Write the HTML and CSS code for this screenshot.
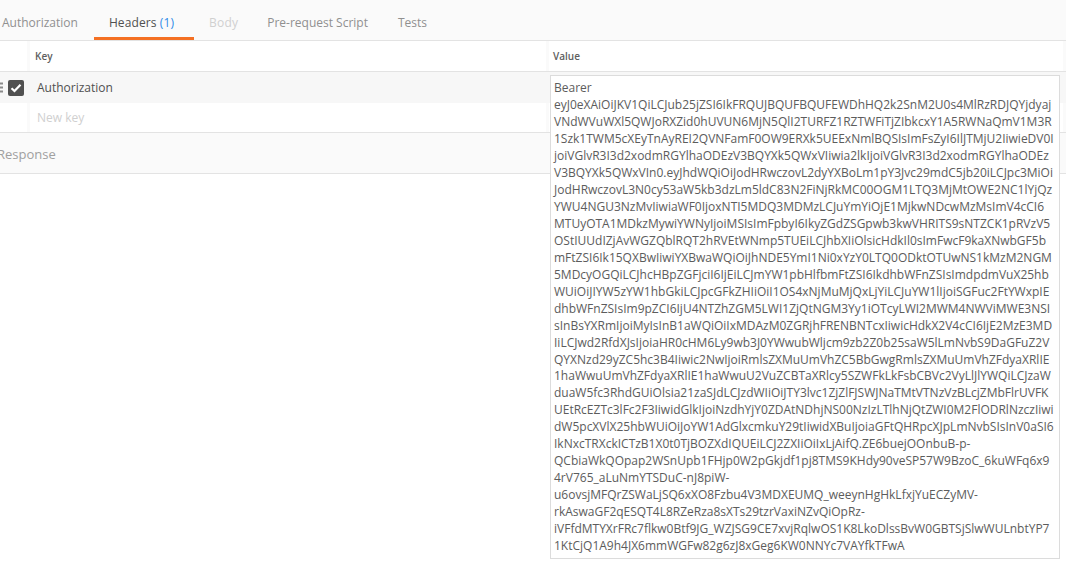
FILE: index.html
```html
<!DOCTYPE html>
<html lang="en">
<head>
<meta charset="utf-8">
<title>Headers</title>
<link rel="stylesheet" href="styles.css">
</head>
<body>
<nav class="tabs">
  <span class="tab">Authorization</span>
  <span class="tab tab-active">Headers <span class="count">(1)</span></span>
  <span class="tab tab-disabled">Body</span>
  <span class="tab tab-script">Pre-request Script</span>
  <span class="tab tab-tests">Tests</span>
</nav>
<div class="row row-head">
  <div class="gutter"></div>
  <div class="cell key"><b>Key</b></div>
  <div class="cell val"><b>Value</b></div>
</div>
<div class="row row-item">
  <div class="gutter">
    <svg class="drag" width="5" height="12" viewBox="0 0 5 12"><path d="M0 1.5h3M0 5.5h3M0 9.5h3" stroke="#8a8a8a" stroke-width="2" fill="none"/></svg>
    <span class="check"><svg width="12" height="10" viewBox="0 0 12 10"><path d="M1.5 5.2 4.5 8 10.5 1.8" stroke="#fff" stroke-width="2.2" fill="none"/></svg></span>
  </div>
  <div class="cell key">Authorization</div>
  <div class="cell val"></div>
</div>
<div class="row row-new">
  <div class="gutter"></div>
  <div class="cell key placeholder">New key</div>
  <div class="cell val"></div>
</div>
<div class="response">Response</div>
<div class="value-box">Bearer
eyJ0eXAiOiJKV1QiLCJub25jZSI6IkFRQUJBQUFBQUFEWDhHQ2k2SnM2U0s4MlRzRDJQYjdyaj
VNdWVuWXl5QWJoRXZid0hUVUN6MjN5QlI2TURFZ1RZTWFiTjZIbkcxY1A5RWNaQmV1M3R
1Szk1TWM5cXEyTnAyREI2QVNFamF0OW9ERXk5UEExNmlBQSIsImFsZyI6IlJTMjU2IiwieDV0I
joiVGlvR3I3d2xodmRGYlhaODEzV3BQYXk5QWxVIiwia2lkIjoiVGlvR3I3d2xodmRGYlhaODEz
V3BQYXk5QWxVIn0.eyJhdWQiOiJodHRwczovL2dyYXBoLm1pY3Jvc29mdC5jb20iLCJpc3MiOi
JodHRwczovL3N0cy53aW5kb3dzLm5ldC83N2FiNjRkMC00OGM1LTQ3MjMtOWE2NC1lYjQz
YWU4NGU3NzMvIiwiaWF0IjoxNTI5MDQ3MDMzLCJuYmYiOjE1MjkwNDcwMzMsImV4cCI6
MTUyOTA1MDkzMywiYWNyIjoiMSIsImFpbyI6IkyZGdZSGpwb3kwVHRITS9sNTZCK1pRVzV5
OStIUUdIZjAvWGZQblRQT2hRVEtWNmp5TUEiLCJhbXIiOlsicHdkIl0sImFwcF9kaXNwbGF5b
mFtZSI6Ik15QXBwIiwiYXBwaWQiOiJhNDE5YmI1Ni0xYzY0LTQ0ODktOTUwNS1kMzM2NGM
5MDcyOGQiLCJhcHBpZGFjciI6IjEiLCJmYW1pbHlfbmFtZSI6IkdhbWFnZSIsImdpdmVuX25hb
WUiOiJIYW5zYW1hbGkiLCJpcGFkZHIiOiI1OS4xNjMuMjQxLjYiLCJuYW1lIjoiSGFuc2FtYWxpIE
dhbWFnZSIsIm9pZCI6IjU4NTZhZGM5LWI1ZjQtNGM3Yy1iOTcyLWI2MWM4NWViMWE3NSI
sInBsYXRmIjoiMyIsInB1aWQiOiIxMDAzM0ZGRjhFRENBNTcxIiwicHdkX2V4cCI6IjE2MzE3MD
IiLCJwd2RfdXJsIjoiaHR0cHM6Ly9wb3J0YWwubWljcm9zb2Z0b25saW5lLmNvbS9DaGFuZ2V
QYXNzd29yZC5hc3B4Iiwic2NwIjoiRmlsZXMuUmVhZC5BbGwgRmlsZXMuUmVhZFdyaXRlIE
1haWwuUmVhZFdyaXRlIE1haWwuU2VuZCBTaXRlcy5SZWFkLkFsbCBVc2VyLlJlYWQiLCJzaW
duaW5fc3RhdGUiOlsia21zaSJdLCJzdWIiOiJTY3lvc1ZjZlFJSWJNaTMtVTNzVzBLcjZMbFlrUVFK
UEtRcEZTc3lFc2F3IiwidGlkIjoiNzdhYjY0ZDAtNDhjNS00NzIzLTlhNjQtZWI0M2FlODRlNzczIiwi
dW5pcXVlX25hbWUiOiJoYW1AdGlxcmkuY29tIiwidXBuIjoiaGFtQHRpcXJpLmNvbSIsInV0aSI6
IkNxcTRXckICTzB1X0t0TjBOZXdIQUEiLCJ2ZXIiOiIxLjAifQ.ZE6buejOOnbuB-p-
QCbiaWkQOpap2WSnUpb1FHjp0W2pGkjdf1pj8TMS9KHdy90veSP57W9BzoC_6kuWFq6x9
4rV765_aLuNmYTSDuC-nJ8piW-
u6ovsjMFQrZSWaLjSQ6xXO8Fzbu4V3MDXEUMQ_weeynHgHkLfxjYuECZyMV-
rkAswaGF2qESQT4L8RZeRza8sXTs29tzrVaxiNZvQiOpRz-
iVFfdMTYXrFRc7flkw0Btf9JG_WZJSG9CE7xvjRqlwOS1K8LkoDlssBvW0GBTSjSlwWULnbtYP7
1KtCjQ1A9h4JX6mmWGFw82g6zJ8xGeg6KW0NNYc7VAYfkTFwA</div>
</body>
</html>
```
FILE: styles.css
```css
* { box-sizing: border-box; }
html, body { margin: 0; height: 569px; overflow: hidden; }
body { position: relative; background: #fff; font-family: "Open Sans", sans-serif; font-size: 12px; color: #505050; }
.tabs { display: flex; height: 41px; padding-left: 2px; background: #fafafa; border-bottom: 1px solid #e3e3e3; }
.tab { height: 40px; line-height: 45px; color: #909090; }
.tab-active { color: #505050; position: relative; margin: 0 35px 0 31px; letter-spacing: 0.1px; }
.tab-active::after { content: ""; position: absolute; left: -15px; right: -20px; bottom: 0; height: 3px; background: #f47023; }
.count { color: #2f8ae8; }
.tab-disabled { color: #d0d0d0; letter-spacing: 0.2px; }
.tab-script { margin-left: 29px; }
.tab-tests { margin-left: 30px; }
.row { display: flex; }
.gutter { width: 30px; flex: none; display: flex; align-items: center; background: #fff; border-right: 3px solid #fafafa; }
.cell { padding-left: 7px; }
.key { flex: none; width: 516px; background: #fff; }
.val { flex: 1; background: #fff; border-left: 3px solid #fafafa; border-right: 3px solid #fafafa; }
.row-head { height: 31px; border-bottom: 1px solid #e3e3e3; font-size: 10px; line-height: 30px; }
.row-head .key { padding-left: 5px; }
.row-head .val { padding-left: 4px; }
.row-head b { font-weight: 600; color: #606060; }
.row-item { height: 31px; background: #f7f7f7; line-height: 31px; }
.row-item .gutter, .row-item .cell { background: #f7f7f7; border-color: #f7f7f7; }
.drag { flex: none; margin-right: 3px; }
.check { flex: none; width: 16px; height: 16px; border-radius: 2px; background: #505050; display: flex; align-items: center; justify-content: center; }
.row-new { height: 30px; line-height: 29px; border-bottom: 1px solid #e3e3e3; }
.placeholder { color: #d0d0d0; }
.response { height: 41px; margin-left: -3px; background: #fafafa; border-bottom: 1px solid #e3e3e3; font-size: 13px; line-height: 42px; color: #a0a0a0; }
.value-box { position: absolute; left: 550px; top: 75px; width: 510px; height: 484px; padding: 4px 0 0 3px; border: 1px solid #dcdcdc; background: #fff; line-height: 16.97px; white-space: pre; color: #5c5c5c; overflow: hidden; }
```
